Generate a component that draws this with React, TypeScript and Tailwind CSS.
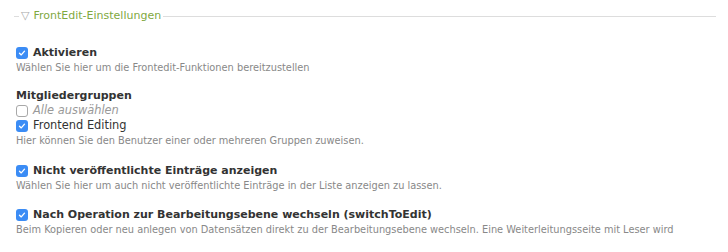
function Check({ checked }: { checked: boolean }) {
  return checked ? (
    <span className="flex h-[12px] w-[12px] shrink-0 items-center justify-center rounded-[3px] bg-[#3b8cf5]">
      <svg viewBox="0 0 12 12" className="h-[10px] w-[10px]">
        <path d="M3 6.2 L5.1 8.3 L9 3.8" fill="none" stroke="#fff" strokeWidth="1.6" strokeLinecap="round" strokeLinejoin="round" />
      </svg>
    </span>
  ) : (
    <span className="h-[12px] w-[12px] shrink-0 rounded-[3px] border border-[#a8a8a8] bg-white" />
  );
}

function Desc({ children }: { children: React.ReactNode }) {
  return <p className="h-[15px] whitespace-nowrap text-[9.8px] leading-[15px] text-[#888]">{children}</p>;
}

function Option({ label, text }: { label: string; text: string }) {
  return (
    <div>
      <div className="flex h-[15px] items-center gap-[5px]">
        <Check checked />
        <span className="text-[11px] font-bold leading-[15px] text-[#333]">{label}</span>
      </div>
      <Desc>{text}</Desc>
    </div>
  );
}

export default function App() {
  return (
    <div className="h-[252px] w-[728px] overflow-hidden bg-white font-['DejaVu_Sans',Verdana,sans-serif]">
      <div className="mt-[8px] flex h-[16px] items-center pl-[14px] pr-[12px]">
        <span className="h-px w-[5px] bg-[#ddd]" />
        <span className="flex items-center gap-[4px] px-[2px] text-[11px] text-[#7fa83f]">
          <span className="text-[11px] text-[#aaa]">▽</span>
          FrontEdit-Einstellungen
        </span>
        <span className="h-px flex-1 bg-[#ddd]" />
      </div>

      <div className="flex flex-col pl-[16px] pt-[21px]">
        <Option label="Aktivieren" text="Wählen Sie hier um die Frontedit-Funktionen bereitzustellen" />

        <div className="mt-[13px]">
          <p className="h-[15px] text-[11px] font-bold leading-[15px] text-[#333]">Mitgliedergruppen</p>
          <div className="flex h-[15px] items-center gap-[5px]">
            <Check checked={false} />
            <span className="text-[11.4px] italic text-[#999]">Alle auswählen</span>
          </div>
          <div className="flex h-[15px] items-center gap-[5px]">
            <Check checked />
            <span className="text-[11.4px] text-[#333]">Frontend Editing</span>
          </div>
          <Desc>Hier können Sie den Benutzer einer oder mehreren Gruppen zuweisen.</Desc>
        </div>

        <div className="mt-[15px]">
          <Option
            label="Nicht veröffentlichte Einträge anzeigen"
            text="Wählen Sie hier um auch nicht veröffentlichte Einträge in der Liste anzeigen zu lassen."
          />
        </div>

        <div className="mt-[14px]">
          <Option
            label="Nach Operation zur Bearbeitungsebene wechseln (switchToEdit)"
            text="Beim Kopieren oder neu anlegen von Datensätzen direkt zu der Bearbeitungsebene wechseln. Eine Weiterleitungsseite mit Leser wird"
          />
        </div>
      </div>
    </div>
  );
}
